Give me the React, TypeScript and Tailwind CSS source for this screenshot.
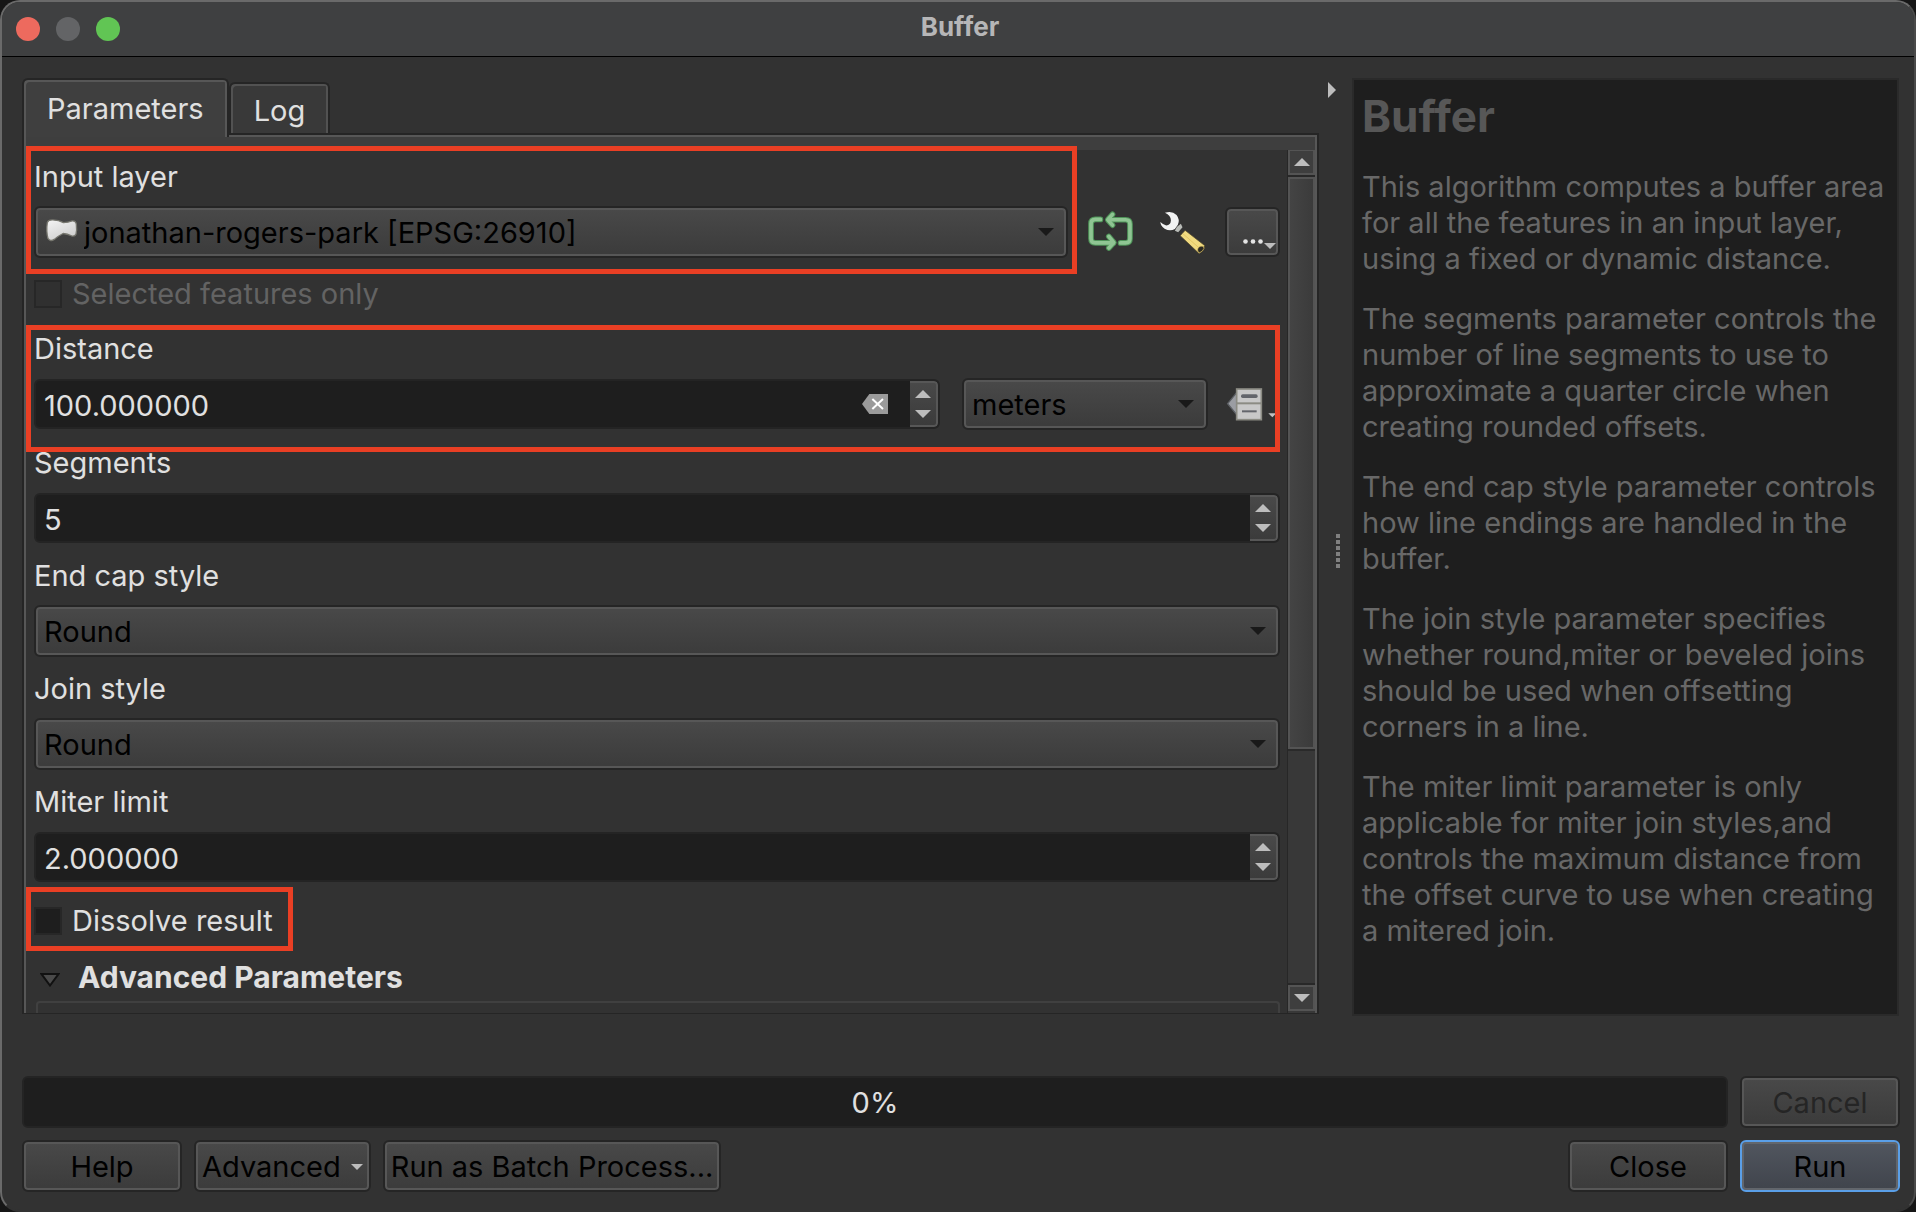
import React, { useState } from "react";

const raised =
  "rounded-md border-2 border-[#252525] bg-linear-to-b from-[#494949] to-[#3b3b3b] shadow-[inset_0_0_0_2px_#575757]";

const helpParagraphs = [
  "This algorithm computes a buffer area for all the features in an input layer, using a fixed or dynamic distance.",
  "The segments parameter controls the number of line segments to use to approximate a quarter circle when creating rounded offsets.",
  "The end cap style parameter controls how line endings are handled in the buffer.",
  "The join style parameter specifies whether round,miter or beveled joins should be used when offsetting corners in a line.",
  "The miter limit parameter is only applicable for miter join styles,and controls the maximum distance from the offset curve to use when creating a mitered join.",
];

function Triangle({ dir, className = "" }: { dir: "up" | "down" | "right"; className?: string }) {
  const points = { up: "0,8 8,0 16,8", down: "0,0 16,0 8,8", right: "0,0 8,8 0,16" }[dir];
  const sideways = dir === "right";
  return (
    <svg
      aria-hidden="true"
      width={sideways ? 8 : 16}
      height={sideways ? 16 : 8}
      viewBox={sideways ? "0 0 8 16" : "0 0 16 8"}
      className={className}
    >
      <polygon points={points} fill="currentColor" />
    </svg>
  );
}

function PolygonLayerIcon() {
  return (
    <svg aria-hidden="true" viewBox="136 655 100 74" className="pointer-events-none absolute top-3 left-[11px] h-[25px] w-[33px]">
      <defs>
        <linearGradient id="layer-fill" x1="0" y1="0" x2="0.6" y2="1">
          <stop offset="0" stopColor="#f4f4f4" />
          <stop offset="1" stopColor="#cfcfcf" />
        </linearGradient>
      </defs>
      <path
        d="M143 668 Q146 659 160 660 Q178 661 192 668 Q206 668 218 663 Q230 662 231 674 Q233 690 230 703 Q226 711 216 708 Q204 702 191 701 Q177 708 164 719 Q152 727 145 716 Q139 694 143 668Z"
        fill="url(#layer-fill)"
        stroke="#77776f"
        strokeWidth="4"
      />
    </svg>
  );
}

function IterateIcon() {
  const lines = (
    <>
      <path d="M180 478H165Q152 478 152 491V535Q152 548 165 548H218" />
      <path d="M205 529L220 547L205 563" />
      <path d="M240 548H255Q268 548 268 535V492Q268 479 255 479H204" />
      <path d="M216 463L202 479L216 495" />
    </>
  );
  return (
    <svg aria-hidden="true" viewBox="140 450 140 125" fill="none" strokeLinecap="round" strokeLinejoin="round" className="h-[42px] w-[47px]">
      <g stroke="#4f9459" strokeWidth="17">{lines}</g>
      <g stroke="#8fc593" strokeWidth="11">{lines}</g>
    </svg>
  );
}

function WrenchIcon() {
  return (
    <svg aria-hidden="true" viewBox="355 448 145 135" className="h-[45px] w-12">
      <path d="M409 499L421 489L426 500L413 515L403 510Z" fill="#b9bcb8" />
      <path
        d="M373 456Q394 448 408 463Q419 477 412 492L403 505Q388 513 372 504Q360 496 359 484Q366 491 377 494Q390 493 391 479Q391 464 373 456Z"
        fill="#f2f3f3"
      />
      <path d="M434 509L493 555Q492 571 476 579L419 525Z" fill="#f0da80" stroke="#3f3823" strokeWidth="2" />
      <path d="M427 519L482 567" stroke="#e3c763" strokeWidth="3" />
      <path d="M472 572Q470 560 481 557Q491 555 491 563Q488 573 477 577Z" fill="#2c2a22" stroke="#d9be62" strokeWidth="2" />
    </svg>
  );
}

function OverrideIcon() {
  return (
    <svg aria-hidden="true" viewBox="1158 140 153 105" className="h-[35px] w-[51px]">
      <path d="M1163 190L1190 157V223Z" fill="#9b9da3" stroke="#5d6065" strokeWidth="4" />
      <rect x="1190" y="146" width="74" height="92" fill="#c8c8c8" stroke="#8b8b83" strokeWidth="5" />
      <path d="M1190 189H1264" stroke="#8b8b83" strokeWidth="6" />
      <rect x="1203" y="162" width="50" height="11" rx="5" fill="#63656b" />
      <rect x="1206" y="210" width="44" height="6" fill="#63656b" />
      <path d="M1285 219H1309L1297 231Z" fill="#c0c0c0" />
    </svg>
  );
}

function ClearIcon() {
  return (
    <svg aria-hidden="true" viewBox="66 162 78 60" className="h-5 w-[26px]">
      <path d="M66 192L88 162H144V222H88Z" fill="#9b9b9b" />
      <path d="M97 177L129 207M129 177L97 207" stroke="#fff" strokeWidth="6" />
    </svg>
  );
}

function Highlight({ className }: { className: string }) {
  return <div aria-hidden="true" className={`pointer-events-none absolute z-10 border-[5px] border-[#ea3f24] ${className}`} />;
}

function Combo({
  id,
  options,
  label,
  className = "",
  icon,
}: {
  id: string;
  options: string[];
  label?: string;
  className?: string;
  icon?: React.ReactNode;
}) {
  return (
    <div className={`relative ${className}`}>
      <select
        id={id}
        aria-label={label}
        className={`h-[52px] w-full appearance-none pt-px text-black outline-none ${raised} ${icon ? "pl-12" : "pl-2"}`}
      >
        {options.map((o) => (
          <option key={o}>{o}</option>
        ))}
      </select>
      {icon}
      <Triangle dir="down" className="pointer-events-none absolute top-[22px] right-[14px] text-[#191919]" />
    </div>
  );
}

function SpinBox({ id, initial, step, decimals, clearable }: { id: string; initial: number; step: number; decimals: number; clearable?: boolean }) {
  const [value, setValue] = useState(initial.toFixed(decimals));
  const bump = (d: number) => setValue((v) => ((parseFloat(v) || 0) + d).toFixed(decimals));
  return (
    <div className="my-px flex h-[50px] min-w-0 flex-1 items-stretch overflow-hidden rounded-md border-2 border-[#242424] bg-[#1e1e1e]">
      <input
        id={id}
        type="text"
        value={value}
        onChange={(e) => setValue(e.target.value)}
        className="min-w-0 flex-1 bg-transparent pt-1 pl-2 text-[#e0e0e0] outline-none"
      />
      {clearable && (
        <button type="button" aria-label="Clear value" onClick={() => setValue((0).toFixed(decimals))} className="mr-[22px]">
          <ClearIcon />
        </button>
      )}
      <div className="flex w-7 flex-col rounded-r border-y-2 border-r-2 border-[#575757] bg-linear-to-b from-[#494949] to-[#3b3b3b] text-[#bdbdbd]">
        <button type="button" aria-label="Increase" onClick={() => bump(step)} className="flex flex-1 items-end justify-center pb-[5px]">
          <Triangle dir="up" />
        </button>
        <button type="button" aria-label="Decrease" onClick={() => bump(-step)} className="flex flex-1 items-start justify-center pt-[7px]">
          <Triangle dir="down" />
        </button>
      </div>
    </div>
  );
}

function Field({ id, label, children }: { id: string; label: string; children: React.ReactNode }) {
  return (
    <div className="flex flex-col">
      <label htmlFor={id} className="mb-3 h-[34px] leading-[34px]">
        {label}
      </label>
      <div className="flex">{children}</div>
    </div>
  );
}

function Check({ id, label, disabled }: { id: string; label: string; disabled?: boolean }) {
  return (
    <div className="flex h-8 items-center gap-[10px]">
      <input
        id={id}
        type="checkbox"
        disabled={disabled}
        className="size-7 appearance-none border-2 border-[#272727] bg-[#1e1e1e] checked:bg-[#8a8a8a] disabled:bg-[#303030]"
      />
      <label htmlFor={id} className={disabled ? "text-[#636363]" : ""}>
        {label}
      </label>
    </div>
  );
}

function PushButton({ children, className = "", disabled }: { children: React.ReactNode; className?: string; disabled?: boolean }) {
  return (
    <button
      type="button"
      disabled={disabled}
      className={`flex h-[52px] items-center justify-center pt-px whitespace-nowrap text-black disabled:text-[#252525] ${raised} ${className}`}
    >
      {children}
    </button>
  );
}

function ScrollBar() {
  return (
    <div className="flex w-7 shrink-0 flex-col border-l border-[#272727] bg-[#383838] text-[#bdbdbd]">
      <button type="button" aria-label="Scroll up" className="flex h-[25px] items-center justify-center border-2 border-t border-[#545454] bg-[#3e3e3e]">
        <Triangle dir="up" />
      </button>
      <div className="flex flex-1 flex-col border-y-2 border-[#282828]">
        <div className="basis-[71%] border-2 border-[#545454] bg-linear-to-r from-[#444] to-[#3b3b3b]" />
        <div className="border-t-2 border-[#2a2a2a]" />
      </div>
      <button type="button" aria-label="Scroll down" className="mb-0.5 flex h-[26px] items-center justify-center border-2 border-[#545454] bg-[#3e3e3e]">
        <Triangle dir="down" />
      </button>
    </div>
  );
}

function Form() {
  return (
    <form className="flex min-w-0 flex-1 flex-col pt-[10px] pr-[7px] pl-2">
      <div className="flex items-end">
        <div className="relative flex min-w-0 flex-1 flex-col">
          <label htmlFor="input-layer" className="mb-3 h-[34px] leading-[34px]">
            Input layer
          </label>
          <Combo id="input-layer" options={["jonathan-rogers-park [EPSG:26910]"]} icon={<PolygonLayerIcon />} />
          <Highlight className="-top-[14px] -right-[9px] -bottom-4 -left-2" />
        </div>
        <div className="ml-[19px] flex h-[52px] shrink-0 items-center">
          <button type="button" aria-label="Iterate over this layer" className="mb-0.5">
            <IterateIcon />
          </button>
          <button type="button" aria-label="Advanced options" className="ml-[25px]">
            <WrenchIcon />
          </button>
          <button
            type="button"
            aria-label="Browse"
            className={`relative ml-[18px] flex h-[50px] w-[55px] items-end justify-center pb-[11px] ${raised}`}
          >
            <svg aria-hidden="true" viewBox="0 0 20 5" className="h-[5px] w-5 fill-[#e4e4e4]">
              <circle cx="2.5" cy="2.5" r="2.3" />
              <circle cx="10" cy="2.5" r="2.3" />
              <circle cx="17.5" cy="2.5" r="2.3" />
            </svg>
            <svg aria-hidden="true" viewBox="0 0 12 6" className="absolute right-[2px] bottom-1.5 h-1.5 w-3 fill-[#bdbdbd]">
              <path d="M0 0H12L6 6Z" />
            </svg>
          </button>
        </div>
      </div>

      <div className="mt-5">
        <Check id="selected-only" label="Selected features only" disabled />
      </div>

      <div className="relative mt-[22px] flex flex-col">
        <label htmlFor="distance" className="mb-3 h-[34px] leading-[34px]">
          Distance
        </label>
        <div className="flex items-center">
          <SpinBox id="distance" initial={100} step={1} decimals={6} clearable />
          <Combo id="units" label="Units" options={["meters"]} className="ml-[22px] w-[246px] shrink-0" />
          <button type="button" aria-label="Data defined override" className="mr-[3px] ml-[18px] shrink-0">
            <OverrideIcon />
          </button>
        </div>
        <Highlight className="-top-[7px] right-0 -bottom-[22px] -left-2" />
      </div>

      <div className="mt-4 flex flex-col gap-[15px]">
        <Field id="segments" label="Segments">
          <SpinBox id="segments" initial={5} step={1} decimals={0} />
        </Field>
        <Field id="end-cap" label="End cap style">
          <Combo id="end-cap" options={["Round", "Flat", "Square"]} className="flex-1" />
        </Field>
        <Field id="join-style" label="Join style">
          <Combo id="join-style" options={["Round", "Miter", "Bevel"]} className="flex-1" />
        </Field>
        <Field id="miter" label="Miter limit">
          <SpinBox id="miter" initial={2} step={1} decimals={6} />
        </Field>
      </div>

      <div className="relative mt-[22px] self-start pr-5">
        <Check id="dissolve" label="Dissolve result" />
        <Highlight className="-top-[18px] right-0 -bottom-[14px] -left-2" />
      </div>

      <button
        type="button"
        aria-expanded="true"
        className="mt-6 flex h-8 items-center gap-[18px] self-start pl-[6px] text-[30px] font-bold"
      >
        <svg aria-hidden="true" viewBox="0 0 20 14" className="mt-[6px] h-[14px] w-5">
          <path d="M1.5 1H18.5L10 12.5Z" fill="#4a4a4a" stroke="#111" strokeWidth="2" />
        </svg>
        Advanced Parameters
      </button>
      <div className="mt-2 ml-0.5 min-h-2 flex-1 rounded-t-sm border-2 border-b-0 border-[#404040]" />
    </form>
  );
}

export default function App() {
  return (
    <div className="min-h-screen bg-[#161616]">
      <main className="flex min-h-screen flex-col overflow-hidden rounded-[20px] border-2 border-[#6a6a6a] border-r-[#4a4a4a] border-b-[#323232] bg-[#323232] font-['Inter',sans-serif] text-[29px] leading-9 text-[#e0e0e0]">
        <header className="grid h-[55px] grid-cols-[1fr_auto_1fr] items-center border-b border-black bg-[#3f4041] px-[14px]">
          <div className="flex gap-4">
            <button type="button" aria-label="Close window" className="size-6 rounded-full bg-[#ed6a5e]" />
            <button type="button" aria-label="Minimize window" disabled className="size-6 rounded-full bg-[#636466]" />
            <button type="button" aria-label="Zoom window" className="size-6 rounded-full bg-[#61c554]" />
          </div>
          <h1 className="pb-1 pl-1 text-[26px] leading-8 font-bold text-[#b6b6b7]">Buffer</h1>
        </header>

        <div className="grid flex-1 grid-cols-[1297fr_33px_547fr] pt-[21px] pr-[15px] pl-5">
          <section className="mb-0.5 flex min-w-0 flex-col">
            <div role="tablist" className="flex h-[55px] items-end">
              <button
                type="button"
                role="tab"
                aria-selected="true"
                className="relative z-10 -mb-1 flex h-[59px] items-start rounded-t-md border-2 border-b-0 border-[#252525] bg-[#3f3f3f] px-[23px] pt-[11px] shadow-[inset_2px_2px_0_#575757,inset_-2px_0_0_#575757]"
              >
                Parameters
              </button>
              <button
                type="button"
                role="tab"
                aria-selected="false"
                className="flex h-[51px] items-start rounded-t-md border-2 border-b-0 border-[#252525] bg-[#393939] px-[23px] pt-[9px] shadow-[inset_2px_2px_0_#525252,inset_-2px_0_0_#525252]"
              >
                Log
              </button>
            </div>
            <div className="flex flex-1 flex-col border-2 border-b border-[#252525]">
              <div className="flex flex-1 flex-col border-x-2 border-t-2 border-[#575757]">
                <div className="h-[13px] bg-[#3e3e3e]" />
                <div className="flex flex-1">
                  <Form />
                  <ScrollBar />
                </div>
              </div>
            </div>
          </section>

          <div className="relative flex flex-col items-center justify-center">
            <button type="button" aria-label="Collapse help" className="absolute top-1 left-[9px] text-[#bdbdbd]">
              <Triangle dir="right" />
            </button>
            <div role="separator" aria-orientation="vertical" className="mt-2 ml-1 flex flex-col gap-0.5">
              {[0, 1, 2, 3, 4, 5].map((n) => (
                <span key={n} className="size-1 bg-[#808080]" />
              ))}
            </div>
          </div>

          <aside className="min-w-0 border-2 border-[#2a2a2a] bg-[#1e1e1e] px-2 pt-[9px] text-[#686868]">
            <h2 className="text-[44px] leading-[54px] font-bold text-[#575757]">Buffer</h2>
            <div className="mt-[26px] flex flex-col gap-6">
              {helpParagraphs.map((p) => (
                <p key={p}>{p}</p>
              ))}
            </div>
          </aside>
        </div>

        <footer className="mt-[60px] flex flex-col gap-3 pr-[14px] pb-[18px] pl-5">
          <div className="flex gap-3">
            <div
              role="progressbar"
              aria-valuenow={0}
              aria-valuemin={0}
              aria-valuemax={100}
              className="flex h-[52px] flex-1 items-center justify-center rounded-md border-2 border-[#242424] bg-[#1e1e1e] pt-px"
            >
              0%
            </div>
            <PushButton className="w-40" disabled>
              Cancel
            </PushButton>
          </div>
          <div className="flex gap-3">
            <PushButton className="w-40">Help</PushButton>
            <PushButton className="gap-[10px] px-[6px]">
              Advanced
              <svg aria-hidden="true" viewBox="0 0 12 6" className="h-1.5 w-3 fill-[#bdbdbd]">
                <path d="M0 0H12L6 6Z" />
              </svg>
            </PushButton>
            <PushButton className="px-[6px]">Run as Batch Process...</PushButton>
            <div className="flex-1" />
            <PushButton className="w-40">Close</PushButton>
            <button
              type="button"
              className="h-[52px] w-40 rounded-md border-2 border-[#5a9fe8] bg-linear-to-b from-[#51565f] to-[#40444c] pt-px text-black shadow-[inset_0_0_0_2px_#62666c]"
            >
              Run
            </button>
          </div>
        </footer>
      </main>
    </div>
  );
}
